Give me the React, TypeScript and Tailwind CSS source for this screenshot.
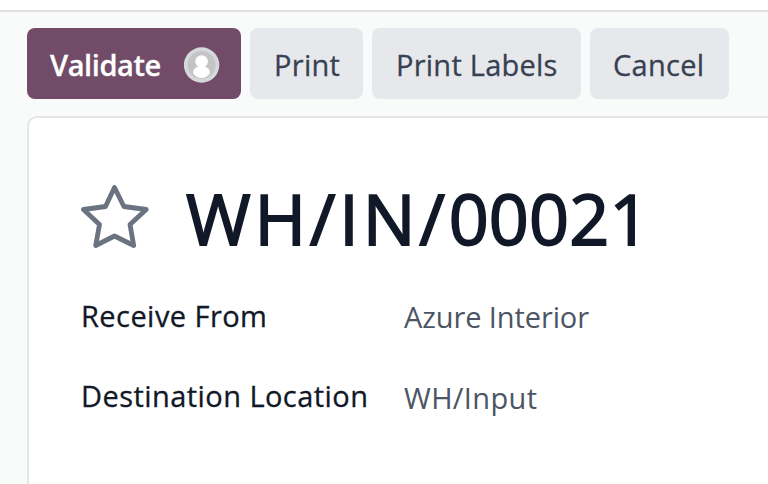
import React from 'react';

const secondary =
  'flex h-[71px] items-center rounded-[8px] bg-[#e7e8ec] pl-6 pt-[2px] text-[29px] whitespace-nowrap text-[#374151] [-webkit-text-stroke:0.3px_#374151]';

const fieldLabel = 'w-[323px] tracking-[0.44px] text-[#111827] [-webkit-text-stroke:0.3px_#111827]';

function Avatar() {
  return (
    <svg width="36" height="36" viewBox="0 0 36 36" className="shrink-0">
      <circle cx="17.600" cy="18" r="17.700" fill="#d6d9dc" />
      <circle cx="17.600" cy="18" r="14" fill="#c3c4c5" />
      <circle cx="17.600" cy="14.500" r="6.300" fill="#fff" />
      <path d="M9 26c0-4.500 3.500-6.500 8.500-6.500s8.500 2 8.500 6.500c-2 3.500-5 5-8.500 5s-6.500-1.500-8.500-5Z" fill="#fff" />
    </svg>
  );
}

export default function App() {
  return (
    <div className="flex h-[484px] w-[768px] flex-col overflow-hidden bg-[#f9fbfa] font-['Open_Sans','Noto_Sans',sans-serif]">
      <div className="h-[12px] shrink-0 border-b-2 border-[#dfe0e4] bg-white" />
      <div className="flex gap-[9px] pt-[16px] pl-[27px]">
        <button className="flex h-[71px] w-[214px] items-center rounded-[8px] bg-[#714b67] pt-[2px] pl-[23px] text-[29px] font-semibold text-white">
          <span className="w-[134px] text-left tracking-[-0.4px] [-webkit-text-stroke:0.3px_#ffffff]">Validate</span>
          <Avatar />
        </button>
        <button className={`${secondary} w-[113px] tracking-[0.3px]`}>Print</button>
        <button className={`${secondary} w-[209px] tracking-[0.25px]`}>Print Labels</button>
        <button className={`${secondary} w-[139px] tracking-[0.3px]`}>
          <span className="-ml-[1px]">Cancel</span>
        </button>
      </div>
      <main className="mt-[17px] ml-[27px] w-[760px] grow rounded-tl-[10px] border-2 border-b-0 border-[#e5e6e7] bg-white pt-[65px] pl-[52px]">
        <div className="flex h-[68px] items-center">
          <svg width="68" height="68" viewBox="0 0 68 68" className="shrink-0">
            <path d="M33.500 4.500L42.900 23.500L65.200 26.500L49 41.500L52.700 62.500L33.500 53L14.700 62.500L18.500 41.500L2.500 26.500L24.500 23.500Z" fill="none" stroke="#6b7280" strokeWidth="4.800" strokeLinejoin="round" />
          </svg>
          <h1 className="ml-[37px] pt-[2px] text-[70px] leading-[68px] whitespace-nowrap text-[#111827] [-webkit-text-stroke:1.8px_#111827]">
            <span className="tracking-[3.8px]">WH/IN/</span>
            <span className="tracking-[0.2px]">00021</span>
          </h1>
        </div>
        <div className="mt-[48px] flex h-[34px] text-[29px] leading-[34px] whitespace-nowrap">
          <span className={fieldLabel}>Receive From</span>
          <span className="pt-[1px] tracking-[-0.1px] text-[#4b5563]">Azure Interior</span>
        </div>
        <div className="mt-[46px] flex h-[36px] text-[29px] leading-[34px] whitespace-nowrap">
          <span className={fieldLabel}>Destination Location</span>
          <span className="pt-[2px] tracking-[0.35px] text-[#4b5563]">WH/Input</span>
        </div>
      </main>
    </div>
  );
}
